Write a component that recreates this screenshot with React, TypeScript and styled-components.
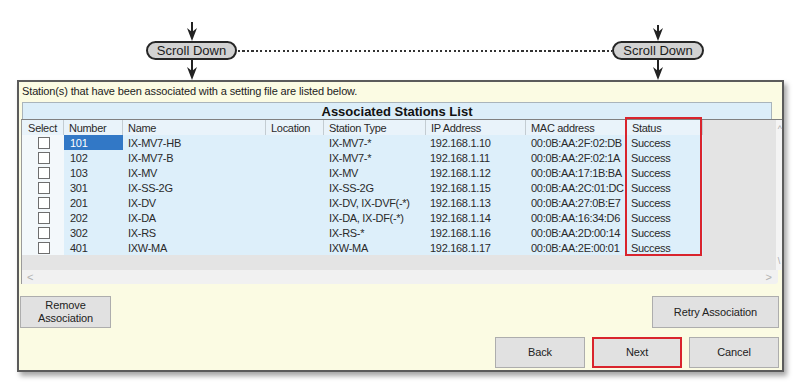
import React from "react";
import styled, { createGlobalStyle } from "styled-components";

const GlobalStyle = createGlobalStyle`
  html, body { margin: 0; padding: 0; background: #ffffff; }
  body { font-family: "Liberation Sans", Arial, sans-serif; }
  * { box-sizing: border-box; }
`;

const Page = styled.div`
  width: 796px;
  height: 382px;
  overflow: hidden;
  background: #fff;
`;

const AnnotationRow = styled.div`
  height: 80px;
  display: flex;
  align-items: flex-start;
  padding-left: 146px;
`;

const Marker = styled.div<{ $w: number; $top: number }>`
  width: ${(p) => p.$w}px;
  display: flex;
  flex-direction: column;
  align-items: center;
  padding-top: ${(p) => p.$top}px;
`;

const Pill = styled.div<{ $w: number }>`
  width: ${(p) => p.$w}px;
  height: 19px;
  border: 2px solid #262626;
  border-radius: 10px;
  background: #d2d2d2;
  color: #1c1c1c;
  font-size: 13px;
  line-height: 15px;
  text-align: center;
`;

const Dotted = styled.div<{ $w: number }>`
  width: ${(p) => p.$w}px;
  height: 2px;
  margin-top: 50px;
  margin-left: 1px;
  background: repeating-linear-gradient(to right, #333 0 2px, transparent 2px 4.5px);
`;

const ArrowSvg = styled.svg`
  display: block;
`;

const Arrow: React.FC<{ h: number }> = ({ h }) => (
  <ArrowSvg width={12} height={h} viewBox={`0 0 12 ${h}`}>
    <line x1="6" y1="0" x2="6" y2={h - 6} stroke="#222" strokeWidth="2" />
    <polygon points={`1,${h - 13} 6,${h - 9} 11,${h - 13} 6,${h}`} fill="#222" />
  </ArrowSvg>
);

const Window = styled.div`
  margin-left: 17px;
  width: 767px;
  height: 292px;
  border: 2px solid #5b5b5b;
  background: #fbfbe3;
  box-shadow: 3px 4px 5px rgba(0, 0, 0, 0.35);
  display: flex;
  flex-direction: column;
`;

const Intro = styled.div`
  padding: 3px 0 0 3px;
  font-size: 11px;
  line-height: 13px;
  letter-spacing: -0.13px;
  color: #222;
  height: 20px;
`;

const GridBlock = styled.div`
  position: relative;
  margin-left: 2px;
  display: flex;
  flex-direction: column;
`;

const TitleBar = styled.div`
  margin-left: 1px;
  width: 750px;
  height: 17px;
  background: #dceef9;
  border: 1px solid #a9b4bb;
  border-bottom: none;
  font-weight: bold;
  font-size: 13px;
  line-height: 17px;
  text-align: center;
  color: #111;
`;

const Frame = styled.div`
  border-top: 1px solid #808080;
  border-left: 1px solid #9a9a9a;
  display: flex;
  flex-direction: column;
`;

const ViewRow = styled.div`
  display: flex;
  height: 150px;
`;

const Viewport = styled.div`
  width: 755px;
  background: #e4e4e4;
`;

const VScroll = styled.div`
  flex: 1;
  background: #f4f4f4;
  display: flex;
  flex-direction: column;
  justify-content: space-between;
  padding: 5px 0 4px 2px;
  color: #aaa;
  font-size: 9px;
  line-height: 9px;
`;

const HScroll = styled.div`
  height: 14px;
  width: 756px;
  background: #f1f1f1;
  border-bottom-right-radius: 3px;
  display: flex;
  align-items: center;
  justify-content: space-between;
  padding: 0 6px 0 5px;
  color: #b0b0b0;
  font-size: 11px;
`;

const COLS = "42px 59px 143px 58px 102px 100px 101px 76px";

const Grid = styled.div`
  width: 681px;
  display: grid;
  grid-template-columns: ${COLS};
  grid-auto-rows: 15px;
  font-size: 11px;
  letter-spacing: -0.3px;
  color: #2a2a2a;
`;

const HeadCell = styled.div<{ $center?: boolean }>`
  height: 16px;
  background: #e9f3fa;
  border-bottom: 1px solid #9da5ab;
  border-right: 1px solid #c3ccd2;
  padding-left: ${(p) => (p.$center ? 0 : 5)}px;
  padding-top: 1px;
  text-align: ${(p) => (p.$center ? "center" : "left")};
  line-height: 14px;
  white-space: nowrap;
`;

const Cell = styled.div<{ $sel?: boolean; $pad?: number }>`
  background: ${(p) => (p.$sel ? "#3278c6" : "#ddeffa")};
  color: ${(p) => (p.$sel ? "#fff" : "#2a2a2a")};
  padding-left: ${(p) => p.$pad ?? 5}px;
  padding-top: 1px;
  line-height: 14px;
  white-space: nowrap;
  overflow: hidden;
`;

const CheckCell = styled.div`
  background: #f3f8fb;
  display: flex;
  justify-content: center;
  align-items: center;
`;

const Check = styled.div`
  width: 12px;
  height: 12px;
  margin-left: 1px;
  border: 1px solid #6e6e6e;
  background: #fff;
`;

const HighlightBox = styled.div`
  position: absolute;
  left: 604px;
  top: 15px;
  width: 77px;
  height: 139px;
  border: 2px solid #d9242d;
  pointer-events: none;
`;

const Bottom = styled.div`
  flex: 1;
  display: flex;
  flex-direction: column;
  padding: 12px 3px 0 1px;
  gap: 9px;
`;

const ButtonRow = styled.div<{ $end?: boolean }>`
  display: flex;
  justify-content: ${(p) => (p.$end ? "flex-end" : "space-between")};
  gap: 7px;
`;

const Btn = styled.div<{ $w: number; $h: number; $hl?: boolean }>`
  width: ${(p) => p.$w}px;
  height: ${(p) => p.$h}px;
  background: #e1e1e1;
  border: ${(p) => (p.$hl ? "2px solid #d9242d" : "1px solid #adadad")};
  display: flex;
  align-items: center;
  justify-content: center;
  text-align: center;
  font-size: 11px;
  line-height: 13px;
  letter-spacing: -0.1px;
  color: #222;
`;

const rows: [string, string, string, string, string, string][] = [
  ["101", "IX-MV7-HB", "", "IX-MV7-*", "192.168.1.10", "00:0B:AA:2F:02:DB"],
  ["102", "IX-MV7-B", "", "IX-MV7-*", "192.168.1.11", "00:0B:AA:2F:02:1A"],
  ["103", "IX-MV", "", "IX-MV", "192.168.1.12", "00:0B:AA:17:1B:BA"],
  ["301", "IX-SS-2G", "", "IX-SS-2G", "192.168.1.15", "00:0B:AA:2C:01:DC"],
  ["201", "IX-DV", "", "IX-DV, IX-DVF(-*)", "192.168.1.13", "00:0B:AA:27:0B:E7"],
  ["202", "IX-DA", "", "IX-DA, IX-DF(-*)", "192.168.1.14", "00:0B:AA:16:34:D6"],
  ["302", "IX-RS", "", "IX-RS-*", "192.168.1.16", "00:0B:AA:2D:00:14"],
  ["401", "IXW-MA", "", "IXW-MA", "192.168.1.17", "00:0B:AA:2E:00:01"],
];

const headers = ["Number", "Name", "Location", "Station Type", "IP Address", "MAC address", "Status"];

export default function App() {
  return (
    <>
      <GlobalStyle />
      <Page>
        <AnnotationRow>
          <Marker $w={91} $top={22}>
            <Arrow h={19} />
            <Pill $w={91}>Scroll Down</Pill>
            <Arrow h={20} />
          </Marker>
          <Dotted $w={374} />
          <Marker $w={92} $top={25}>
            <Arrow h={16} />
            <Pill $w={92}>Scroll Down</Pill>
            <Arrow h={20} />
          </Marker>
        </AnnotationRow>
        <Window>
          <Intro>Station(s) that have been associated with a setting file are listed below.</Intro>
          <GridBlock>
            <TitleBar>Associated Stations List</TitleBar>
            <Frame>
              <ViewRow>
                <Viewport>
                  <Grid>
                    <HeadCell $center>Select</HeadCell>
                    {headers.map((h) => (
                      <HeadCell key={h}>{h}</HeadCell>
                    ))}
                    {rows.map((r, i) => (
                      <React.Fragment key={r[0]}>
                        <CheckCell>
                          <Check />
                        </CheckCell>
                        <Cell $sel={i === 0} $pad={6}>{r[0]}</Cell>
                        <Cell>{r[1]}</Cell>
                        <Cell>{r[2]}</Cell>
                        <Cell>{r[3]}</Cell>
                        <Cell $pad={4}>{r[4]}</Cell>
                        <Cell>{r[5]}</Cell>
                        <Cell $pad={4}>Success</Cell>
                      </React.Fragment>
                    ))}
                  </Grid>
                </Viewport>
                <VScroll>
                  <span>^</span>
                  <span>\</span>
                </VScroll>
              </ViewRow>
              <HScroll>
                <span>&lt;</span>
                <span>&gt;</span>
              </HScroll>
            </Frame>
            <HighlightBox />
          </GridBlock>
          <Bottom>
            <ButtonRow>
              <Btn $w={91} $h={32}>
                Remove
                <br />
                Association
              </Btn>
              <Btn $w={127} $h={32}>Retry Association</Btn>
            </ButtonRow>
            <ButtonRow $end>
              <Btn $w={90} $h={31}>Back</Btn>
              <Btn $w={90} $h={31} $hl>Next</Btn>
              <Btn $w={90} $h={31}>Cancel</Btn>
            </ButtonRow>
          </Bottom>
        </Window>
      </Page>
    </>
  );
}
